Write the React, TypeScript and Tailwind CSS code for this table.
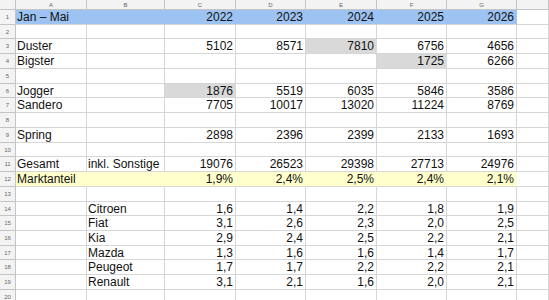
import React from "react";

type Cell = { v?: string; align?: "l" | "r"; bg?: "blue" | "gray" | "yellow" };

const cols = ["A", "B", "C", "D", "E", "F", "G", ""];
const colW = ["w-[71px]", "w-[78px]", "w-[71px]", "w-[70px]", "w-[71px]", "w-[70px]", "w-[70px]", "flex-1"];
const rowH = [
  "h-[15px]", "h-[14px]", "h-[15px]", "h-[15px]", "h-[15px]", "h-[14px]", "h-[15px]", "h-[15px]", "h-[15px]", "h-[14px]",
  "h-[15px]", "h-[15px]", "h-[15px]", "h-[14px]", "h-[15px]", "h-[15px]", "h-[14px]", "h-[15px]", "h-[15px]", "h-[15px]",
];

const r = (v: string, bg?: Cell["bg"]): Cell => ({ v, align: "r", bg });
const l = (v: string, bg?: Cell["bg"]): Cell => ({ v, align: "l", bg });
const E: Cell = {};

const nums = (a: string[]): Cell[] => a.map((x) => r(x));

const rows: Cell[][] = [
  [l("Jan – Mai", "blue"), { bg: "blue" }, r("2022", "blue"), r("2023", "blue"), r("2024", "blue"), r("2025", "blue"), r("2026", "blue"), E],
  [],
  [l("Duster"), E, r("5102"), r("8571"), r("7810", "gray"), r("6756"), r("4656"), E],
  [l("Bigster"), E, E, E, E, r("1725", "gray"), r("6266"), E],
  [],
  [l("Jogger"), E, r("1876", "gray"), r("5519"), r("6035"), r("5846"), r("3586"), E],
  [l("Sandero"), E, ...nums(["7705", "10017", "13020", "11224", "8769"]), E],
  [],
  [l("Spring"), E, ...nums(["2898", "2396", "2399", "2133", "1693"]), E],
  [],
  [l("Gesamt"), l("inkl. Sonstige"), ...nums(["19076", "26523", "29398", "27713", "24976"]), E],
  [l("Marktanteil", "yellow"), { bg: "yellow" }, ...["1,9%", "2,4%", "2,5%", "2,4%", "2,1%"].map((x) => r(x, "yellow")), E],
  [],
  [E, l("Citroen"), ...nums(["1,6", "1,4", "2,2", "1,8", "1,9"]), E],
  [E, l("Fiat"), ...nums(["3,1", "2,6", "2,3", "2,0", "2,5"]), E],
  [E, l("Kia"), ...nums(["2,9", "2,4", "2,5", "2,2", "2,1"]), E],
  [E, l("Mazda"), ...nums(["1,3", "1,6", "1,6", "1,4", "1,7"]), E],
  [E, l("Peugeot"), ...nums(["1,7", "1,7", "2,2", "2,2", "2,1"]), E],
  [E, l("Renault"), ...nums(["3,1", "2,1", "1,6", "2,0", "2,1"]), E],
  [],
];

function bgClass(bg?: Cell["bg"]) {
  if (bg === "blue") return "bg-[#9dc3f2] border-r-[#9dc3f2]";
  if (bg === "gray") return "bg-[#d9d9d9] border-r-[#d9d9d9]";
  if (bg === "yellow") return "bg-[#ffffcc] border-r-[#ffffcc]";
  return "bg-white border-r-[#d6d6d6]";
}

export default function App() {
  return (
    <div
      className="w-[549px] h-[300px] overflow-hidden bg-white text-[12px] text-[#111]"
      style={{ fontFamily: '"Liberation Sans", Arial, sans-serif' }}
    >
      <div className="flex h-[10px]">
        <div className="w-[16px] h-full bg-[#f3f3f3] border-r border-b border-[#c4c4c4]" />
        {cols.map((c, i) => (
          <div
            key={i}
            className={`${colW[i]} h-full bg-[#f3f3f3] border-r border-b border-[#c4c4c4] flex items-center justify-center text-[6px] leading-none text-[#666]`}
          >
            {c}
          </div>
        ))}
      </div>
      {rowH.map((h, ri) => {
        const row = rows[ri] || [];
        return (
          <div key={ri} className={`flex ${h}`}>
            <div className="w-[16px] h-full bg-[#f3f3f3] border-r border-b border-[#c4c4c4] flex items-center justify-center text-[6px] leading-none text-[#666]">
              {ri + 1}
            </div>
            {cols.map((_, ci) => {
              const cell = row[ci] || {};
              return (
                <div
                  key={ci}
                  className={`${colW[ci]} h-full border-r border-b border-b-[#d6d6d6] ${bgClass(cell.bg)} flex items-center whitespace-nowrap overflow-visible leading-none ${
                    cell.align === "r" ? "justify-end pr-[2px]" : "justify-start pl-[1px]"
                  }`}
                >
                  {cell.v}
                </div>
              );
            })}
          </div>
        );
      })}
    </div>
  );
}
